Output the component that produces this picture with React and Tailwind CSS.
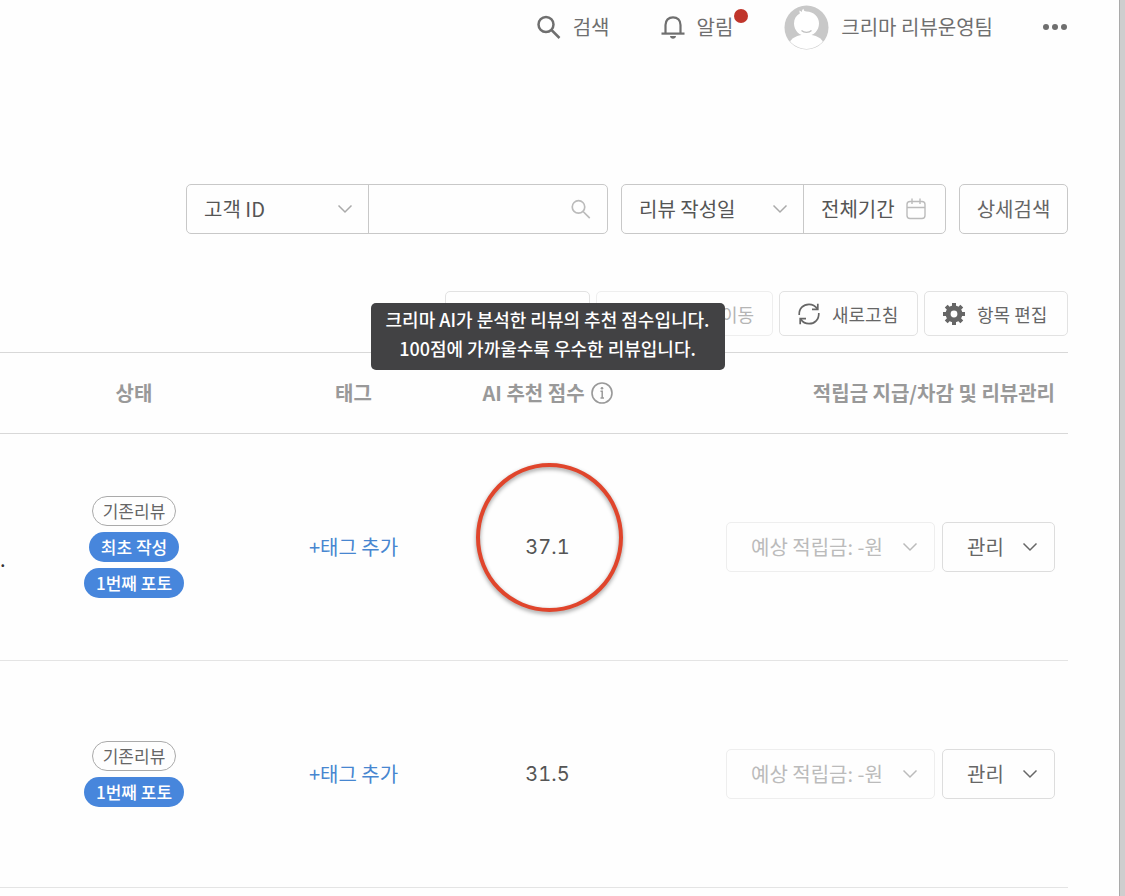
import React, { useState } from "react";

function SearchIcon({ className, strokeWidth }) {
  return (
    <svg className={className} viewBox="0 0 24 24" fill="none" stroke="currentColor" strokeWidth={strokeWidth}>
      <circle cx="9" cy="9.5" r="7.5" />
      <path d="M14.5 15 L22.5 23" />
    </svg>
  );
}

function BellIcon() {
  return (
    <svg className="h-6 w-6" viewBox="0 0 24 24" fill="none" stroke="currentColor" strokeWidth="2.2">
      <path d="M4.500 18.500 V10 C4.500 5.300 7.600 2.300 12 2.300 C16.400 2.300 19.500 5.300 19.500 10 V18.500" />
      <path d="M0.500 18.600 H23.500" />
      <path d="M9 21 H15 C14.800 22.800 13.600 23.800 12 23.800 C10.400 23.800 9.200 22.800 9 21 Z" fill="currentColor" stroke="none" />
    </svg>
  );
}

function Avatar() {
  return (
    <svg className="h-[45px] w-[45px]" viewBox="0 0 45 45">
      <defs>
        <clipPath id="avatar">
          <circle cx="22.5" cy="22.5" r="21.5" />
        </clipPath>
      </defs>
      <circle cx="22.5" cy="22.5" r="22" fill="#c8c8c8" />
      <g clipPath="url(#avatar)" fill="#fff">
        <path d="M4 40 C7 33 13 29.500 22.500 29.500 C32 29.500 38 33 41 40 V46 H4 Z" />
        <path d="M22.500 6.500 C21 6.500 19.500 6 19.500 3.800 C18 5 17.800 6 18 7 L15.500 5.500 C15.300 7 15.600 7.800 16 8.300 C12 10.500 10 14 10 18.500 C10 25.500 15.500 31 22.500 31 C29.500 31 35 25.500 35 18.500 C35 11.500 29.500 6.500 22.500 6.500 Z" />
      </g>
      <path d="M17.500 25.500 C20 28 25 28 27.500 25.500" fill="none" stroke="#c0c0c0" strokeWidth="1.2" />
    </svg>
  );
}

function ChevronDown({ className }) {
  return (
    <svg className={className} viewBox="0 0 16 10" fill="none" stroke="currentColor" strokeWidth="1.5">
      <path d="M1.5 1.5 L8 8 L14.5 1.5" />
    </svg>
  );
}

function CalendarIcon() {
  return (
    <svg className="h-[22px] w-5 text-[#bbb]" viewBox="0 0 20 22" fill="none" stroke="currentColor" strokeWidth="1.4">
      <rect x="1" y="3.500" width="18" height="17" rx="3" />
      <path d="M1 9.500 H19 M6 0.500 V6 M14 0.500 V6" />
    </svg>
  );
}

function RefreshIcon() {
  return (
    <svg className="h-[22px] w-[22px]" viewBox="0 0 22 22" fill="none" stroke="currentColor" strokeWidth="1.7">
      <path d="M1.200 12 C0.800 5.500 5.500 1.300 11 1.300 C14.500 1.300 17.300 2.800 19.200 5.800" />
      <path d="M19.800 0.800 V6.400 H14" />
      <path d="M20.800 10 C21.200 16.500 16.500 20.700 11 20.700 C7.500 20.700 4.700 19.200 2.800 16.200" />
      <path d="M2.200 21.200 V15.600 H8" />
    </svg>
  );
}

function GearIcon() {
  return (
    <svg className="h-[22px] w-[22px]" viewBox="0 0 22 22" fill="none" stroke="currentColor">
      <circle cx="11" cy="11" r="5.900" strokeWidth="5" />
      {/* eight teeth */}
      <path
        d="M11 0 V4 M11 18 V22 M0 11 H4 M18 11 H22 M3.200 3.200 L6 6 M16 16 L18.800 18.800 M18.800 3.200 L16 6 M6 16 L3.200 18.800"
        strokeWidth="4"
      />
    </svg>
  );
}

function InfoIcon() {
  return (
    <svg className="h-[22px] w-[22px]" viewBox="0 0 22 22" fill="none" stroke="currentColor" strokeWidth="1.6">
      <circle cx="11" cy="11" r="10" />
      <path d="M9.500 9.300 H11.200 V16.200 M9.500 16 H13" strokeWidth="1.5" />
      <circle cx="11" cy="6.300" r="1.300" fill="currentColor" stroke="none" />
    </svg>
  );
}

function FilterSelect({ label, options }) {
  return (
    <div className="relative flex w-[181px] items-center">
      <select
        aria-label={label}
        className="h-12 w-full appearance-none bg-transparent pl-[17px] text-xl text-[#555] outline-none"
      >
        {options.map((option) => (
          <option key={option}>{option}</option>
        ))}
      </select>
      <ChevronDown className="pointer-events-none absolute right-[15px] h-[10px] w-4 text-[#aaa]" />
    </div>
  );
}

function Badge({ type, children }) {
  const style =
    type === "outline"
      ? "border border-[#aaa] px-[10px] text-[#666]"
      : "bg-[#4786dc] px-3 font-medium text-white";
  return (
    <span className={`flex h-[30px] items-center rounded-full text-[17px] ${style}`}>
      {children}
    </span>
  );
}

const reviews = [
  {
    id: 1,
    text: ".",
    badges: [
      { type: "outline", label: "기존리뷰" },
      { type: "fill", label: "최초 작성" },
      { type: "fill", label: "1번째 포토" },
    ],
    score: "37.1",
    highlight: true,
  },
  {
    id: 2,
    text: "",
    badges: [
      { type: "outline", label: "기존리뷰" },
      { type: "fill", label: "1번째 포토" },
    ],
    score: "31.5",
    highlight: false,
  },
];

export default function App() {
  const [keyword, setKeyword] = useState("");

  return (
    <div className="min-h-screen bg-[#cecece] pr-[5px] font-['Noto_Sans_CJK_KR',sans-serif]">
      <div className="min-h-screen border-r border-[#aaa] bg-[#fefefe] pr-[51px]">

        {/* Top bar */}
        <header className="flex h-[54px] items-center justify-end text-xl text-[#6f6f6f]">
          <button type="button" className="flex items-center gap-3">
            <SearchIcon className="h-6 w-6" strokeWidth="2.5" />
            검색
          </button>
          <button type="button" className="relative ml-[51px] flex items-center gap-3">
            <BellIcon />
            알림
            <span className="absolute -top-1 -right-[15px] h-[14px] w-[14px] rounded-full bg-[#c0352b]" />
          </button>
          <button type="button" className="ml-[51px] flex items-center gap-3">
            <Avatar />
            크리마 리뷰운영팀
          </button>
          <button type="button" aria-label="더보기" className="ml-[50px]">
            <svg className="h-6 w-[25px]" viewBox="0 0 25 24" fill="currentColor">
              <circle cx="3" cy="12" r="3" />
              <circle cx="12" cy="12" r="3" />
              <circle cx="21" cy="12" r="3" />
            </svg>
          </button>
        </header>

        {/* Filters */}
        <form
          onSubmit={(e) => e.preventDefault()}
          className="mt-[130px] flex justify-end gap-[13px] text-xl text-[#555]"
        >
          <div className="flex h-[50px] rounded-[5px] border border-[#c8c8c8]">
            <FilterSelect label="검색 조건" options={["고객 ID"]} />
            <div className="flex w-[239px] items-center border-l border-[#c8c8c8] pr-4">
              <input
                type="text"
                aria-label="검색어"
                value={keyword}
                onChange={(e) => setKeyword(e.target.value)}
                className="h-full min-w-0 flex-1 bg-transparent px-4 outline-none"
              />
              <SearchIcon className="h-5 w-5 text-[#bbb]" strokeWidth="2" />
            </div>
          </div>

          <div className="flex h-[50px] rounded-[5px] border border-[#c8c8c8]">
            <FilterSelect label="기간 기준" options={["리뷰 작성일"]} />
            <button
              type="button"
              className="flex w-[142px] items-center justify-between border-l border-[#c8c8c8] pr-[19px] pl-[17px]"
            >
              전체기간
              <CalendarIcon />
            </button>
          </div>

          <button
            type="submit"
            className="h-[50px] w-[109px] rounded-[5px] border border-[#c8c8c8] text-[#666]"
          >
            상세검색
          </button>
        </form>

        {/* Table actions */}
        <div className="mt-[57px] flex justify-end gap-[6px] text-lg text-[#666]">
          <button
            type="button"
            disabled
            aria-label="선택"
            className="h-[45px] w-[145px] rounded-[5px] border border-[#e2e2e2]"
          />
          <button
            type="button"
            disabled
            className="flex h-[45px] w-[177px] items-center justify-between rounded-[5px] border border-[#eee] px-[18px] text-[#b5b5b5]"
          >
            <svg className="h-[22px] w-[22px]" viewBox="0 0 22 22" fill="none" stroke="currentColor" strokeWidth="2">
              <rect x="4" y="1" width="14" height="20" rx="1" />
            </svg>
            이동
          </button>
          <button
            type="button"
            className="flex h-[45px] w-[139px] items-center gap-3 rounded-[5px] border border-[#e2e2e2] px-[18px]"
          >
            <RefreshIcon />
            새로고침
          </button>
          <button
            type="button"
            className="flex h-[45px] w-[144px] items-center gap-3 rounded-[5px] border border-[#e2e2e2] px-[18px]"
          >
            <GearIcon />
            항목 편집
          </button>
        </div>

        {/* Reviews */}
        <table className="mt-4 w-full table-fixed border-collapse text-xl">
          <thead>
            <tr className="h-[81px] border-y border-[#d8d8d8] text-[#999]">
              <th className="w-6" />
              <th className="w-[220px] font-bold">상태</th>
              <th className="w-[219px] font-bold">태그</th>
              <th className="relative w-[169px] p-0 font-bold">
                <div className="flex items-center justify-center gap-1.5">
                  AI 추천 점수
                  <InfoIcon />
                </div>
                <div
                  role="tooltip"
                  className="absolute -top-[50px] left-1/2 w-[354px] -translate-x-1/2 rounded-[5px] bg-[#424244] pt-0.5 pb-[7px] text-center text-lg/[29px] font-medium text-white"
                >
                  크리마 AI가 분석한 리뷰의 추천 점수입니다.
                  <br />
                  100점에 가까울수록 우수한 리뷰입니다.
                </div>
              </th>
              <th className="pr-[13px] text-right font-bold">적립금 지급/차감 및 리뷰관리</th>
            </tr>
          </thead>
          <tbody>
            {reviews.map((review) => (
              <tr key={review.id} className="h-[227px] border-b border-[#e4e4e4]">
                <td className="p-0 pt-6 text-[#333]">{review.text}</td>
                <td>
                  <div className="flex flex-col items-center gap-[6px]">
                    {review.badges.map((badge) => (
                      <Badge key={badge.label} type={badge.type}>
                        {badge.label}
                      </Badge>
                    ))}
                  </div>
                </td>
                <td className="text-center">
                  <a href="#tag" className="text-[#4786d0]">
                    +태그 추가
                  </a>
                </td>
                <td className="relative text-center font-['Inter',sans-serif] text-[#555] tabular-nums">
                  {review.score}
                  {review.highlight && (
                    <span className="absolute top-[29px] left-[13px] h-[149px] w-[147px] rounded-[50%] border-4 border-[#e0452c] drop-shadow-[0_2px_2px_rgba(0,0,0,0.4)]" />
                  )}
                </td>
                <td className="pr-[13px]">
                  <div className="flex justify-end gap-[7px]">
                    <button
                      type="button"
                      disabled
                      className="flex h-[50px] w-[209px] items-center justify-between rounded-[5px] border border-[#eee] pr-4 pl-6 text-[#bbb]"
                    >
                      예상 적립금: -원
                      <ChevronDown className="h-[10px] w-4" />
                    </button>
                    <button
                      type="button"
                      className="flex h-[50px] w-[113px] items-center justify-between rounded-[5px] border border-[#ddd] pr-4 pl-6 text-[#666]"
                    >
                      관리
                      <ChevronDown className="h-[10px] w-4" />
                    </button>
                  </div>
                </td>
              </tr>
            ))}
          </tbody>
        </table>
      </div>
    </div>
  );
}
